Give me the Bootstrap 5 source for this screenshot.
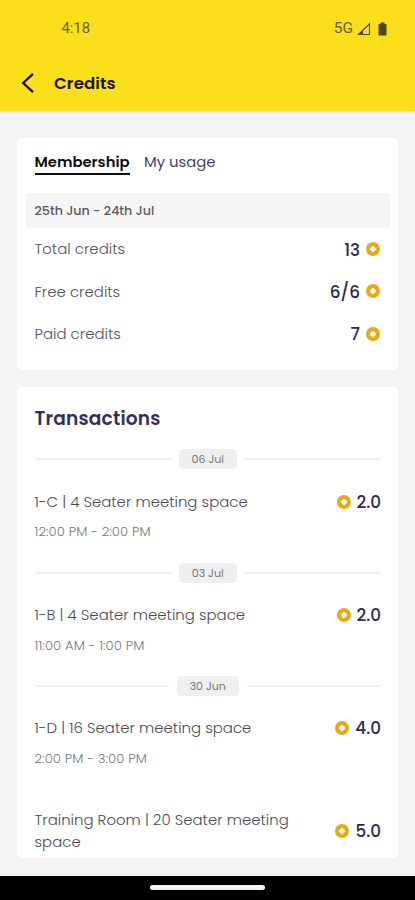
<!DOCTYPE html>
<html lang="en">
<head>
<meta charset="utf-8">
<meta name="viewport" content="width=device-width, initial-scale=1">
<title>Credits</title>
<link href="https://cdn.jsdelivr.net/npm/bootstrap@5.3.0/dist/css/bootstrap.min.css" rel="stylesheet">
<style>
body{font-family:Poppins,Inter,"Open Sans",sans-serif;background:#f4f4f4;color:#5b5966;height:900px;overflow:hidden;white-space:nowrap}
.app-head{height:111px;background:#fbdf1b;box-shadow:0 1px 2px rgba(0,0,0,.12)}
.status{height:56px;padding:1px 28px 0 61.5px;color:#6b5f12;font-family:Roboto,sans-serif;font-size:15.5px}
.clock{font-size:15px;letter-spacing:-.1px}
.title-row{height:54px;padding-left:21px;color:#15130a}
.title-row h1{font-size:16.6px;font-weight:600;margin-left:20px;padding-top:1px;letter-spacing:.1px}
.panel{margin:0 17px;background:#fff;border-radius:5px}
.summary{margin-top:27px;height:232px;padding:0 8px 0 9px}
.tabs{height:55px;padding:12px 8px 0 8.5px;gap:14.5px;font-size:14.8px;line-height:23px}
.tabs .on{color:#0d0d12;font-weight:600;border-bottom:2.5px solid #0d0d12;height:25px}
.tabs .off{color:#454264}
.period{height:35px;background:#f5f5f5;border-radius:3px;padding:1px 8.5px 0;font-size:12.7px;font-weight:500;color:#5a5a5e}
.line-item{height:42.3px;padding:0 10px 0 8.5px;font-size:14.95px;font-weight:300;color:#54515f}
.line-item .lbl{padding-top:1px}
.line-item .figure{padding-top:2px}
.amount{color:#2e2853;font-size:16.8px;font-weight:500;gap:6px}
.history{margin-top:17px;height:471px;padding:0 17px 0 17.5px}
.history h2{font-size:18.6px;font-weight:600;color:#352e5c;height:62.4px;line-height:64px;letter-spacing:.2px}
.day{height:20px;gap:8px}
.day i{height:2px;background:#f1f1f1;flex:1}
.day span{height:20px;line-height:20px;padding:0 13px;background:#efefef;border-radius:4px;font-size:11px;color:#777}
.booking{height:93.3px;padding-top:21.5px}
.booking .name{font-size:14.93px;font-weight:300;line-height:22px;height:26px;color:#4c4a58}
.booking .time{font-size:13.2px;font-weight:300;line-height:18px;margin-top:6.6px;letter-spacing:.08px;color:#77767c}
.booking .amount{height:22px}
.booking .figure{padding-top:1px}
.booking.last{padding-top:19.6px;height:auto}
.booking.last .amount{height:44px;padding-top:1px}
.booking.last .figure{padding-top:0}
.booking.last .name{height:auto}
.nav-strip{height:24.5px;background:#000;padding-bottom:1px}
.nav-strip b{width:115px;height:5px;border-radius:3px;background:#f4f4f4}
</style>
<script src="https://cdn.jsdelivr.net/npm/bootstrap@5.3.0/dist/js/bootstrap.bundle.min.js"></script>
</head>
<body class="d-flex flex-column">
<svg width="0" height="0" class="d-none"><symbol id="coin" viewBox="0 0 14 14"><circle cx="7" cy="7" r="7" fill="#e8aa12"/><path d="M7 4.5Q8.4 5.6 9.5 7Q8.4 8.4 7 9.5Q5.6 8.4 4.5 7Q5.6 5.6 7 4.5Z" fill="#fff" stroke="#fff" stroke-width="1.3" stroke-linejoin="round"/></symbol></svg>
<header class="app-head flex-shrink-0">
  <div class="status d-flex align-items-center justify-content-between">
    <span class="clock">4:18</span>
    <span class="d-flex align-items-center"><span>5G</span>
      <svg class="ms-1" width="14" height="14" viewBox="0 0 14 14"><path d="M1.5 12.5 12.5 1.8V12.5Z" fill="none" stroke="#4f460c" stroke-width="1.1"/><path d="M1 13 6 8V13Z" fill="#4f460c"/></svg>
      <svg style="margin-left:7px" width="9" height="14" viewBox="0 0 9 14"><path d="M2.5 0.5h4v1.5H8.5V13.5H.5V2h2Z" fill="#4f460c"/></svg>
    </span>
  </div>
  <div class="title-row d-flex align-items-center">
    <svg width="13" height="22" viewBox="0 0 13 22"><path d="M12 1.8 2.2 11 12 20.2" fill="none" stroke="#15130a" stroke-width="2.3"/></svg>
    <h1 class="mb-0">Credits</h1>
  </div>
</header>
<main class="flex-grow-1">
  <section class="panel summary">
    <nav class="tabs d-flex"><span class="on">Membership</span><span class="off">My usage</span></nav>
    <div class="period d-flex align-items-center"><span>25th Jun - 24th Jul</span></div>
    <div class="line-item d-flex align-items-center justify-content-between"><span class="lbl">Total credits</span><span class="amount d-flex align-items-center"><span class="figure">13</span><svg width="14" height="14"><use href="#coin"/></svg></span></div>
    <div class="line-item d-flex align-items-center justify-content-between"><span class="lbl">Free credits</span><span class="amount d-flex align-items-center"><span class="figure">6/6</span><svg width="14" height="14"><use href="#coin"/></svg></span></div>
    <div class="line-item d-flex align-items-center justify-content-between"><span class="lbl">Paid credits</span><span class="amount d-flex align-items-center"><span class="figure">7</span><svg width="14" height="14"><use href="#coin"/></svg></span></div>
  </section>
  <section class="panel history">
    <h2 class="mb-0">Transactions</h2>
    <div class="day d-flex align-items-center"><i></i><span>06 Jul</span><i></i></div>
    <div class="booking d-flex justify-content-between"><div><div class="name">1-C | 4 Seater meeting space</div><div class="time">12:00 PM - 2:00 PM</div></div><div class="amount d-flex align-items-center"><svg width="14" height="14"><use href="#coin"/></svg><span class="figure">2.0</span></div></div>
    <div class="day d-flex align-items-center"><i></i><span>03 Jul</span><i></i></div>
    <div class="booking d-flex justify-content-between"><div><div class="name">1-B | 4 Seater meeting space</div><div class="time">11:00 AM - 1:00 PM</div></div><div class="amount d-flex align-items-center"><svg width="14" height="14"><use href="#coin"/></svg><span class="figure">2.0</span></div></div>
    <div class="day d-flex align-items-center"><i></i><span>30 Jun</span><i></i></div>
    <div class="booking d-flex justify-content-between"><div><div class="name">1-D | 16 Seater meeting space</div><div class="time">2:00 PM - 3:00 PM</div></div><div class="amount d-flex align-items-center"><svg width="14" height="14"><use href="#coin"/></svg><span class="figure">4.0</span></div></div>
    <div class="booking last d-flex justify-content-between"><div class="name">Training Room | 20 Seater meeting<br>space</div><div class="amount d-flex align-items-center"><svg width="14" height="14"><use href="#coin"/></svg><span class="figure">5.0</span></div></div>
  </section>
</main>
<footer class="nav-strip flex-shrink-0 d-flex align-items-center justify-content-center"><b></b></footer>
</body>
</html>
